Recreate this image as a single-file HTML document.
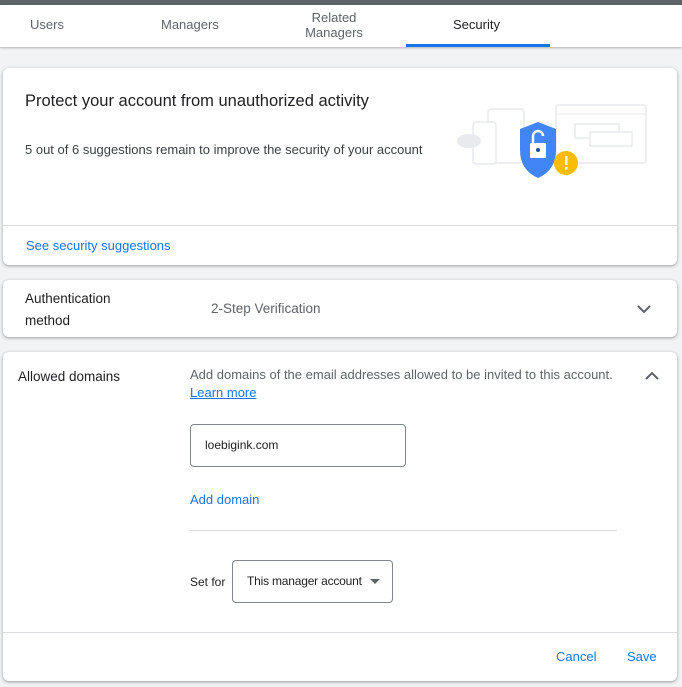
<!DOCTYPE html>
<html><head><meta charset="utf-8"><style>
*{margin:0;padding:0;box-sizing:border-box}
body{width:682px;height:687px;background:#f1f3f4;font-family:"Liberation Sans",sans-serif;position:relative;overflow:hidden;color:#202124}
.a{position:absolute}
.card{position:absolute;background:#fff;border-radius:6px;box-shadow:0 1px 2px rgba(60,64,67,.3),0 1px 3px 1px rgba(60,64,67,.15)}
.link{color:#1a73e8}
</style></head><body>
<div class="a" style="left:0;top:0;width:682px;height:5px;background:#5f6368"></div>
<div class="a" style="left:0;top:5px;width:682px;height:42px;background:#fff;box-shadow:0 1px 2px rgba(60,64,67,.35)"></div>
<div class="a" style="left:30px;top:17px;font-size:13px;color:#5f6368">Users</div>
<div class="a" style="left:161px;top:17px;font-size:13px;color:#5f6368">Managers</div>
<div class="a" style="left:300px;top:10px;width:68px;text-align:center;font-size:13px;line-height:15px;color:#5f6368">Related Managers</div>
<div class="a" style="left:453px;top:17px;font-size:13px;color:#202124">Security</div>
<div class="a" style="left:406px;top:44px;width:144px;height:3px;background:#1a73e8"></div>

<div class="card" style="left:3px;top:68px;width:674px;height:197px"></div>
<div class="a" style="left:25px;top:92px;font-size:16.5px;color:#202124">Protect your account from unauthorized activity</div>
<div class="a" style="left:25px;top:142px;font-size:13px;color:#3c4043">5 out of 6 suggestions remain to improve the security of your account</div>
<div class="a" style="left:3px;top:225px;width:674px;height:1px;background:#dadce0"></div>
<div class="a link" style="left:26px;top:238px;font-size:13px">See security suggestions</div>
<svg class="a" style="left:445px;top:100px" width="205" height="85" viewBox="0 0 205 85">
<rect x="111" y="5" width="90" height="58" rx="2" fill="#fff" stroke="#e8eaed" stroke-width="1.5"/>
<line x1="111" y1="14" x2="201" y2="14" stroke="#e8eaed"/>
<rect x="130" y="24" width="44" height="14" fill="#fff" stroke="#e8eaed" stroke-width="1.5"/>
<rect x="145" y="32" width="42" height="14" fill="#fff" stroke="#e8eaed" stroke-width="1.5"/>
<rect x="43" y="9" width="36" height="54" rx="3" fill="#fff" stroke="#e8eaed" stroke-width="1.5"/>
<rect x="28" y="22" width="23" height="42" rx="3" fill="#fff" stroke="#e8eaed" stroke-width="1.5"/>
<ellipse cx="24" cy="41" rx="12" ry="7" fill="#e8eaed"/>
<path d="M75 29 L93 22 L111 29 L111 50 Q111 70 93 78 Q75 70 75 50 Z" fill="#4285f4"/>
<rect x="85" y="43" width="16" height="15" rx="1" fill="#fff"/>
<path d="M88 43 V36 a5 5 0 0 1 10 0" fill="none" stroke="#fff" stroke-width="2.5"/>
<circle cx="93" cy="50" r="2" fill="#1a4fb0"/>
<circle cx="121" cy="63" r="12" fill="#fbbc04"/>
<rect x="120" y="56" width="2.5" height="9" fill="#fff"/><rect x="120" y="67" width="2.5" height="2.5" fill="#fff"/>
</svg>

<div class="card" style="left:3px;top:280px;width:674px;height:57px"></div>
<div class="a" style="left:25px;top:288px;font-size:13.5px;line-height:22px;color:#202124">Authentication<br>method</div>
<div class="a" style="left:211px;top:301px;font-size:13.5px;color:#5f6368">2-Step Verification</div>
<svg class="a" style="left:636px;top:303px" width="16" height="12"><path d="M2 3 L8 9 L14 3" fill="none" stroke="#5f6368" stroke-width="2"/></svg>

<div class="card" style="left:3px;top:352px;width:674px;height:329px"></div>
<div class="a" style="left:18px;top:369px;font-size:13.5px;color:#202124">Allowed domains</div>
<div class="a" style="left:190px;top:367px;font-size:13px;color:#5f6368">Add domains of the email addresses allowed to be invited to this account.</div>
<div class="a link" style="left:190px;top:385px;font-size:13px;text-decoration:underline">Learn more</div>
<svg class="a" style="left:644px;top:370px" width="16" height="12"><path d="M2 9 L8 3 L14 9" fill="none" stroke="#5f6368" stroke-width="2"/></svg>
<div class="a" style="left:190px;top:424px;width:216px;height:43px;border:1px solid #80868b;border-radius:4px"></div>
<div class="a" style="left:205px;top:438px;font-size:12px;color:#202124">loebigink.com</div>
<div class="a link" style="left:190px;top:492px;font-size:13px">Add domain</div>
<div class="a" style="left:190px;top:530px;width:427px;height:1px;background:#dadce0"></div>
<div class="a" style="left:190px;top:575px;font-size:12px;color:#202124">Set for</div>
<div class="a" style="left:232px;top:560px;width:161px;height:43px;border:1px solid #80868b;border-radius:4px"></div>
<div class="a" style="left:247px;top:574px;font-size:12px;letter-spacing:-0.2px;color:#202124">This manager account</div>
<svg class="a" style="left:370px;top:579px" width="10" height="6"><path d="M0 0 L10 0 L5 5Z" fill="#5f6368"/></svg>
<div class="a" style="left:3px;top:632px;width:674px;height:1px;background:#dadce0"></div>
<div class="a link" style="left:556px;top:649px;font-size:13px">Cancel</div>
<div class="a link" style="left:627px;top:649px;font-size:13px">Save</div>
</body></html>
